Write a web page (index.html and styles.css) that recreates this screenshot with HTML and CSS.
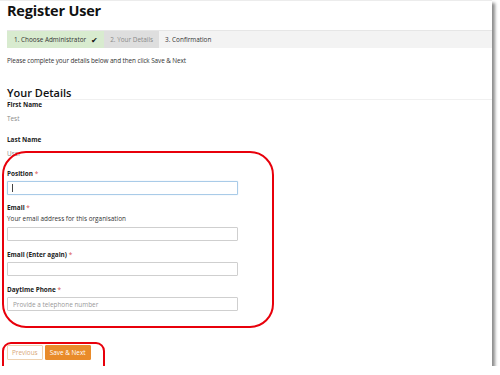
FILE: index.html
```html
<!DOCTYPE html>
<html lang="en">
<head>
    <meta charset="UTF-8">
    <title>Register User</title>
    <link rel="stylesheet" href="styles.css">
</head>
<body>
    <div class="page">
        <h1 class="title">Register User</h1>

        <div class="steps">
            <span class="step step-done">1. Choose Administrator <span class="tick">&#10004;</span></span>
            <span class="step step-current">2. Your Details</span>
            <span class="step">3. Confirmation</span>
        </div>

        <p class="intro">Please complete your details below and then click Save &amp; Next</p>

        <h2 class="section-title">Your Details</h2>

        <!-- read-only fields -->
        <div class="field">
            <div class="label">First Name</div>
            <div class="value">Test</div>
        </div>
        <div class="field">
            <div class="label">Last Name</div>
            <div class="value">User</div>
        </div>

        <!-- editable fields -->
        <div class="field field-input first-input">
            <label class="label" for="position">Position <span class="req">*</span></label>
            <div class="input-wrap">
                <input class="input input-focus" id="position" type="text">
                <span class="caret"></span>
            </div>
        </div>
        <div class="field field-input">
            <label class="label" for="email">Email <span class="req">*</span></label>
            <div class="help">Your email address for this organisation</div>
            <input class="input" id="email" type="text">
        </div>
        <div class="field field-input">
            <label class="label" for="email2">Email (Enter again) <span class="req">*</span></label>
            <input class="input" id="email2" type="text">
        </div>
        <div class="field field-input">
            <label class="label" for="phone">Daytime Phone <span class="req">*</span></label>
            <input class="input" id="phone" type="text" placeholder="Provide a telephone number">
        </div>

        <div class="actions">
            <button class="btn btn-prev">Previous</button>
            <button class="btn btn-next">Save &amp; Next</button>
        </div>

        <!-- annotation rings -->
        <div class="mark mark-form"></div>
        <div class="mark mark-actions"></div>
    </div>
</body>
</html>
```

FILE: styles.css
```css
:root {
    --text: #222;
    --muted: #8a8a8a;
    --orange: #e98b2a;
    --ring: #e8000b;
}

html {
    overflow: hidden;
    background: #fff;
}

body {
    margin: 0;
    font-family: "Open Sans", "Noto Sans", sans-serif;
    color: var(--text);
    font-size: 6.4px;
    line-height: 10px;
}

.page {
    position: relative;
    box-sizing: border-box;
    width: 492px;
    height: 366px;
    padding-left: 7px;
    background: #fff;
    border-top: 1px solid #ececec;
    box-shadow: 3px 3px 3px rgba(0,0,0,0.45);
}

.title {
    margin: 0;
    padding-top: 1px;
    font-size: 14.5px;
    line-height: 18px;
    font-weight: 700;
    letter-spacing: -0.2px;
    color: #111;
}

.steps {
    display: flex;
    margin-top: 10px;
    height: 18px;
    background: #f3f3f3;
    border-top: 1px solid #e6e6e6;
    box-sizing: border-box;
}

.step {
    display: flex;
    align-items: center;
    padding: 0 6px;
    color: #333;
}

.step-done {
    background: #d8ebcf;
    padding-left: 7px;
}

.tick {
    margin-left: 5px;
    font-size: 8px;
    color: #111;
}

.step-current {
    background: #dedede;
    color: #8a8a8a;
}

.intro {
    margin: 8px 0 0;
    color: #333;
    letter-spacing: -0.1px;
}

.section-title {
    margin: 21px 0 0;
    font-size: 11px;
    line-height: 12px;
    font-weight: 600;
    color: #111;
    border-bottom: 1px solid #f0f0f0;
}

.field .label {
    display: block;
    font-weight: 700;
    color: #222;
}

.field + .field {
    margin-top: 11px;
}

.field .value {
    margin-top: 4px;
    color: var(--muted);
}

.field.first-input {
    margin-top: 10px;
}

.field-input + .field-input {
    margin-top: 8px;
}

.field-input + .field-input + .field-input {
    margin-top: 9px;
}

.req {
    color: #d9534f;
    font-weight: 400;
}

.help {
    margin-top: 1px;
    color: #333;
}

.input-wrap {
    position: relative;
    margin-top: 2px;
}

.input {
    display: block;
    box-sizing: border-box;
    width: 231px;
    height: 14px;
    margin-top: 2px;
    padding: 0 5px;
    border: 1px solid #cfcfcf;
    border-radius: 1px;
    font-family: inherit;
    font-size: 6.4px;
    color: #333;
    outline: none;
}

.input-wrap .input {
    margin-top: 0;
}

.input::placeholder {
    color: #999;
}

.help + .input {
    margin-top: 3px;
}

.input-focus {
    border-color: #a9cbe8;
    box-shadow: 0 0 1px rgba(102,175,233,0.5);
}

.caret {
    position: absolute;
    left: 5px;
    top: 3px;
    width: 1px;
    height: 8px;
    background: #444;
}

.actions {
    display: flex;
    gap: 2px;
    margin-top: 34px;
}

.btn {
    height: 15px;
    padding: 0 4px;
    font-family: inherit;
    font-size: 6.4px;
    border-radius: 1px;
    cursor: pointer;
}

.btn-prev {
    background: #fff;
    border: 1px solid #efd2b0;
    color: #d8a878;
}

.btn-next {
    background: var(--orange);
    border: 1px solid var(--orange);
    color: #fff;
}

.mark {
    position: absolute;
    border: 2px solid var(--ring);
    box-sizing: border-box;
    pointer-events: none;
}

.mark-form {
    left: 2px;
    top: 150px;
    width: 272px;
    height: 177px;
    border-radius: 24px;
}

.mark-actions {
    left: 2px;
    top: 341px;
    width: 103px;
    height: 34px;
    border-radius: 9px;
}
```
